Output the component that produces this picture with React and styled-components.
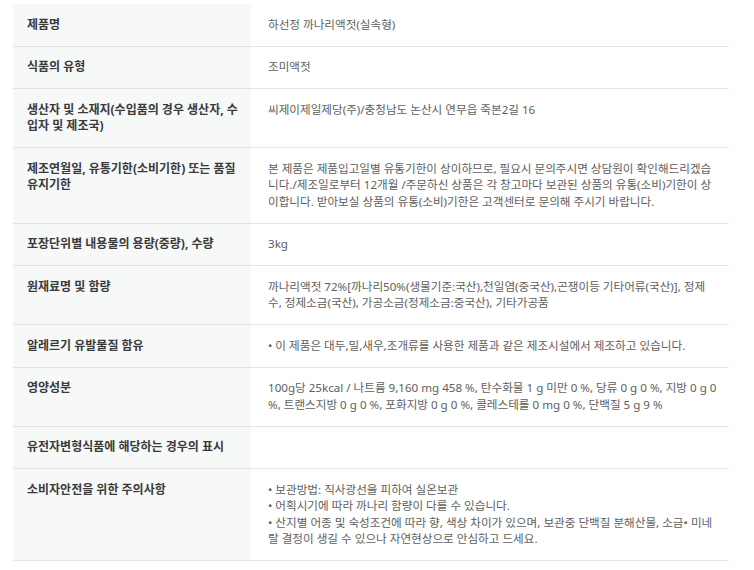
import React from 'react';
import styled, { createGlobalStyle } from 'styled-components';

const GlobalStyle = createGlobalStyle`
  html, body {
    margin: 0;
    padding: 0;
    background: #fff;
  }
  body {
    font-family: "Noto Sans", "Noto Sans CJK KR", sans-serif;
  }
`;

const Page = styled.div`
  padding: 4px 0 0 13px;
`;

const Table = styled.div`
  width: 716px;
  display: flex;
  flex-direction: column;
`;

const Row = styled.div`
  display: grid;
  grid-template-columns: 238px 478px;
  border-bottom: 1px solid #e4e4e4;
`;

const Label = styled.div`
  background: #f7f8f8;
  padding: 12.5px 10px 12.5px 14px;
  font-size: 12px;
  line-height: 16.5px;
  font-weight: 700;
  color: #3a3a3a;
`;

const Value = styled.div`
  padding: 12.5px 12px 12.5px 17px;
  display: flex;
  flex-direction: column;
  font-size: 11.6px;
  line-height: 16.5px;
  color: #5e5e5e;
`;

const Line = styled.span`
  display: block;
`;

const rows = [
  { label: '제품명', value: ['하선정 까나리액젓(실속형)'] },
  { label: '식품의 유형', value: ['조미액젓'] },
  {
    label: '생산자 및 소재지(수입품의 경우 생산자, 수입자 및 제조국)',
    value: ['씨제이제일제당(주)/충청남도 논산시 연무읍 죽본2길 16'],
  },
  {
    label: '제조연월일, 유통기한(소비기한) 또는 품질유지기한',
    value: [
      '본 제품은 제품입고일별 유통기한이 상이하므로, 필요시 문의주시면 상담원이 확인해드리겠습니다./제조일로부터 12개월 /주문하신 상품은 각 창고마다 보관된 상품의 유통(소비)기한이 상이합니다. 받아보실 상품의 유통(소비)기한은 고객센터로 문의해 주시기 바랍니다.',
    ],
  },
  { label: '포장단위별 내용물의 용량(중량), 수량', value: ['3kg'] },
  {
    label: '원재료명 및 함량',
    value: [
      '까나리액젓 72%[까나리50%(생물기준:국산),천일염(중국산),곤쟁이등 기타어류(국산)], 정제수, 정제소금(국산), 가공소금(정제소금:중국산), 기타가공품',
    ],
  },
  {
    label: '알레르기 유발물질 함유',
    value: ['• 이 제품은 대두,밀,새우,조개류를 사용한 제품과 같은 제조시설에서 제조하고 있습니다.'],
  },
  {
    label: '영양성분',
    value: [
      '100g당 25kcal / 나트륨 9,160 mg 458 %, 탄수화물 1 g 미만 0 %, 당류 0 g 0 %, 지방 0 g 0 %, 트랜스지방 0 g 0 %, 포화지방 0 g 0 %, 콜레스테롤 0 mg 0 %, 단백질 5 g 9 %',
    ],
  },
  { label: '유전자변형식품에 해당하는 경우의 표시', value: [''] },
  {
    label: '소비자안전을 위한 주의사항',
    value: [
      '• 보관방법: 직사광선을 피하여 실온보관',
      '• 어획시기에 따라 까나리 함량이 다를 수 있습니다.',
      '• 산지별 어종 및 숙성조건에 따라 향, 색상 차이가 있으며, 보관중 단백질 분해산물, 소금• 미네랄 결정이 생길 수 있으나 자연현상으로 안심하고 드세요.',
    ],
  },
];

const App = () => (
  <>
    <GlobalStyle />
    <Page>
      <Table>
        {rows.map((row) => (
          <Row key={row.label}>
            <Label>{row.label}</Label>
            <Value>
              {row.value.map((text, i) => (
                <Line key={i}>{text || '\u00a0'}</Line>
              ))}
            </Value>
          </Row>
        ))}
      </Table>
    </Page>
  </>
);

export default App;
